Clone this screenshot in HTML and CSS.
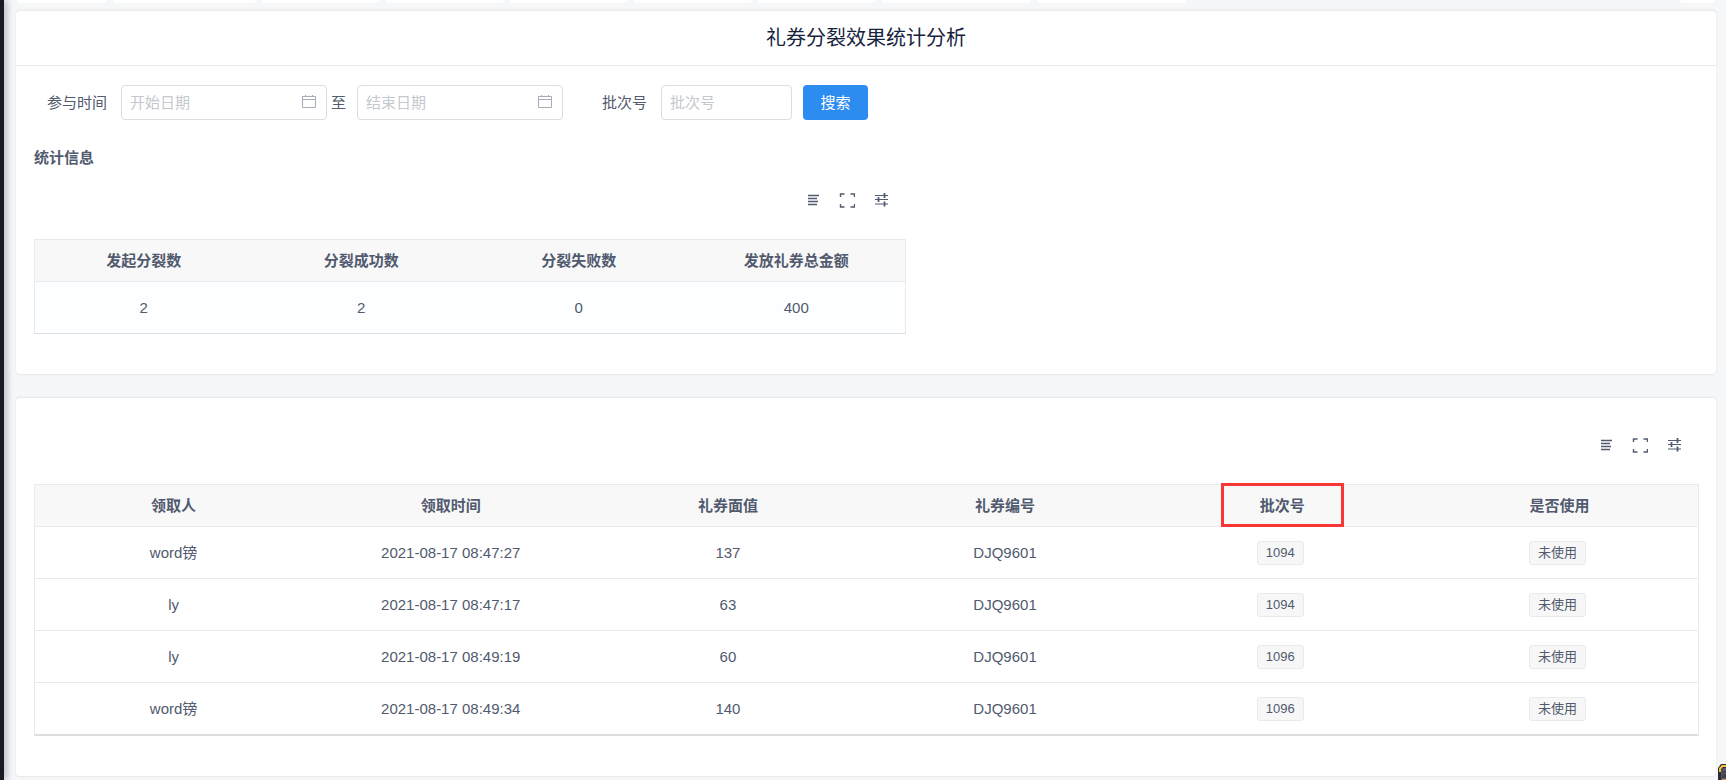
FILE: index.html
```html
<!DOCTYPE html>
<html lang="zh-CN">

<head>
  <meta charset="UTF-8">
  <meta name="viewport" content="width=device-width, initial-scale=1.0">
  <title>礼券分裂效果统计分析</title>
  <link rel="stylesheet" href="styles.css">
</head>

<body>
  <!-- Icons shared by both table toolbars -->
  <svg class="icon-defs" aria-hidden="true">
    <symbol id="icon-density" viewBox="0 0 16 16">
      <path d="M3 3.5h11M3 6.5h9M3 9.5h10M3 12.5h9" stroke="currentColor" stroke-width="1.7" />
    </symbol>
    <symbol id="icon-full" viewBox="0 0 16 16">
      <path d="M1.5 5V2h4M11.500 2h4V5M1.500 12v3h4M11.500 15h4V12" fill="none" stroke="currentColor" stroke-width="1.4" />
    </symbol>
    <symbol id="icon-columns" viewBox="0 0 16 16">
      <path d="M2 3.500h13M2 7.500h13M2 12h13" stroke="currentColor" stroke-width="1.2" />
      <path d="M11.500 1v5M5.500 5v5M11.500 9.500v5" stroke="currentColor" stroke-width="1.8" />
    </symbol>
  </svg>

  <aside class="sider"></aside>

  <main class="content">
    <!-- Page tabs, scrolled almost out of view -->
    <div class="tabs">
      <span class="tab tab-home"></span>
      <span class="tab tab-wide"></span>
      <span class="tab"></span>
      <span class="tab"></span>
      <span class="tab"></span>
      <span class="tab"></span>
      <span class="tab"></span>
      <span class="tab tab-wider"></span>
      <span class="tab tab-wider"></span>
      <span class="tab tab-more"></span>
    </div>

    <section class="card">
      <h1 class="card-title">礼券分裂效果统计分析</h1>

      <form class="search-form">
        <label for="start">参与时间</label>
        <div class="date-box">
          <input id="start" type="text" placeholder="开始日期">
          <svg class="date-icon" viewBox="0 0 16 16">
            <path d="M1.500 2.500h13v11h-13zM1.500 5.500h13M4.500 1v2M11.500 1v2" fill="none" stroke="currentColor" />
          </svg>
        </div>
        <label for="end" class="to">至</label>
        <div class="date-box">
          <input id="end" type="text" placeholder="结束日期">
          <svg class="date-icon" viewBox="0 0 16 16">
            <path d="M1.500 2.500h13v11h-13zM1.500 5.500h13M4.500 1v2M11.500 1v2" fill="none" stroke="currentColor" />
          </svg>
        </div>
        <label for="batch" class="batch-label">批次号</label>
        <input id="batch" class="batch-input" type="text" placeholder="批次号">
        <button type="button" class="search-btn">搜索</button>
      </form>

      <h2 class="sub-title">统计信息</h2>

      <div class="summary">
        <div class="toolbar">
          <button type="button" aria-label="密度"><svg><use href="#icon-density" /></svg></button>
          <button type="button" aria-label="全屏"><svg><use href="#icon-full" /></svg></button>
          <button type="button" aria-label="列设置"><svg><use href="#icon-columns" /></svg></button>
        </div>
        <table class="summary-table">
          <thead>
            <tr>
              <th>发起分裂数</th>
              <th>分裂成功数</th>
              <th>分裂失败数</th>
              <th>发放礼券总金额</th>
            </tr>
          </thead>
          <tbody>
            <tr>
              <td>2</td>
              <td>2</td>
              <td>0</td>
              <td>400</td>
            </tr>
          </tbody>
        </table>
      </div>
    </section>

    <section class="card card-list">
      <div class="toolbar">
        <button type="button" aria-label="密度"><svg><use href="#icon-density" /></svg></button>
        <button type="button" aria-label="全屏"><svg><use href="#icon-full" /></svg></button>
        <button type="button" aria-label="列设置"><svg><use href="#icon-columns" /></svg></button>
      </div>
      <table class="list-table">
        <thead>
          <tr>
            <th>领取人</th>
            <th>领取时间</th>
            <th>礼券面值</th>
            <th>礼券编号</th>
            <th class="marked">批次号</th>
            <th>是否使用</th>
          </tr>
        </thead>
        <tbody>
          <tr>
            <td>word镑</td>
            <td>2021-08-17 08:47:27</td>
            <td>137</td>
            <td>DJQ9601</td>
            <td><span class="tag">1094</span></td>
            <td><span class="tag">未使用</span></td>
          </tr>
          <tr>
            <td>ly</td>
            <td>2021-08-17 08:47:17</td>
            <td>63</td>
            <td>DJQ9601</td>
            <td><span class="tag">1094</span></td>
            <td><span class="tag">未使用</span></td>
          </tr>
          <tr>
            <td>ly</td>
            <td>2021-08-17 08:49:19</td>
            <td>60</td>
            <td>DJQ9601</td>
            <td><span class="tag">1096</span></td>
            <td><span class="tag">未使用</span></td>
          </tr>
          <tr>
            <td>word镑</td>
            <td>2021-08-17 08:49:34</td>
            <td>140</td>
            <td>DJQ9601</td>
            <td><span class="tag">1096</span></td>
            <td><span class="tag">未使用</span></td>
          </tr>
        </tbody>
      </table>
    </section>
  </main>

  <!-- Floating widget, mostly off the corner -->
  <svg class="widget" viewBox="0 0 8 16" aria-hidden="true">
    <path d="M0 16V4l3-4h5v16z" fill="#2a2b33" />
    <path d="M1 8V4l3-3h4v2H5L3 5v3z" fill="#f0c040" />
    <path d="M3 16V7l2-3h3v12z" fill="#555a6b" />
    <path d="M4 8h4M4 11h4M4 13h4" stroke="#2a2b33" />
    <path d="M4 15.500h4" stroke="#e8874a" />
  </svg>
</body>

</html>
```
FILE: styles.css
```css
* {
  box-sizing: border-box;
}

body {
  margin: 0;
  display: flex;
  height: 100vh;
  overflow: hidden;
  background-color: #f5f7f9;
  color: #515a6e;
  font-family: "Liberation Sans", "Noto Sans CJK SC", sans-serif;
  font-size: 15px;
  line-height: 24px;
}

.icon-defs {
  position: absolute;
  width: 0;
  height: 0;
}

.sider {
  flex: none;
  width: 4px;
  background-color: #191a23;
  box-shadow: 2px 0 7px rgba(0, 21, 41, 0.4);
}

.content {
  flex: 1;
  min-width: 0;
  padding: 0 10px 0 12px;
}

/* Tabs */
.tabs {
  display: flex;
  gap: 6px;
  height: 3px;
  padding: 0 1px;
  margin-bottom: 7px;
}

.tab {
  width: 118px;
  background-color: white;
  border-radius: 0 0 3px 3px;
}

.tab-home {
  width: 90px;
}

.tab-wide {
  width: 143px;
}

.tab-wider {
  width: 149px;
}

.tab-more {
  width: 35px;
  margin-left: auto;
}

/* Cards */
.card {
  background-color: white;
  border-radius: 4px;
  border-top: 1px solid #e8eaec;
  box-shadow: 0 1px 1px #e8eaec, 0 0 2px rgba(0, 0, 0, 0.1);
  padding-bottom: 40px;
  margin-bottom: 23px;
}

.card-title {
  margin: 0;
  padding: 11px 0;
  border-bottom: 1px solid #e8eaec;
  color: #17233d;
  font-size: 20px;
  line-height: 32px;
  font-weight: normal;
  text-align: center;
}

/* Search form */
.search-form {
  display: flex;
  align-items: center;
  padding: 19px 31px 0;
}

.search-form label {
  margin-right: 14px;
}

.search-form .to {
  margin: 0 11px 0 4px;
}

.search-form .batch-label {
  margin-left: 39px;
}

.search-form input {
  width: 100%;
  height: 35px;
  padding: 0 8px;
  border: 1px solid #dcdee2;
  border-radius: 4px;
  background-color: white;
  color: #515a6e;
  font-family: inherit;
  font-size: 15px;
}

.search-form input::placeholder {
  color: #c5c8ce;
}

.date-box {
  position: relative;
  width: 206px;
}

.date-icon {
  position: absolute;
  top: 9px;
  right: 10px;
  width: 16px;
  height: 16px;
  color: #a5abb8;
}

.search-form .batch-input {
  width: 131px;
}

.search-btn {
  width: 65px;
  height: 35px;
  margin-left: 11px;
  padding: 0 0 2px;
  border: none;
  border-radius: 4px;
  background-color: #2d8cf0;
  color: white;
  font-family: inherit;
  font-size: 15px;
  cursor: pointer;
}

.sub-title {
  margin: 26px 18px 0;
  font-size: 15px;
  line-height: 24px;
}

/* Tables */
.summary {
  width: 907px;
}

.toolbar {
  display: flex;
  justify-content: flex-end;
  gap: 18px;
  padding: 22px 34px 31px;
}

.toolbar button {
  width: 16px;
  height: 16px;
  padding: 0;
  border: none;
  background: none;
  color: #515a6e;
  cursor: pointer;
}

.toolbar svg {
  display: block;
  width: 16px;
  height: 16px;
}

table {
  table-layout: fixed;
  width: calc(100% - 35px);
  margin-left: 18px;
  border: 1px solid #e8eaec;
  border-bottom-color: #dcdee2;
  border-spacing: 0;
}

th,
td {
  padding: 0;
  text-align: center;
}

th {
  height: 42px;
  background-color: #f8f8f9;
  border-bottom: 1px solid #e8eaec;
}

td {
  height: 52px;
  border-bottom: 1px solid #e8eaec;
}

.summary-table td {
  height: 51px;
  background-color: #fcfeff;
  border-bottom: none;
}

.card-list {
  padding-top: 17px;
}

.list-table tr:last-child td {
  border-bottom-color: #dcdee2;
}

.marked {
  position: relative;
}

/* Red frame over the batch column heading */
.marked::after {
  content: "";
  box-sizing: border-box;
  position: absolute;
  top: -2px;
  bottom: -1px;
  left: 50%;
  width: 123px;
  margin-left: -61px;
  border: 3px solid #f93737;
}

.tag {
  display: inline-block;
  height: 24px;
  margin-right: 4px;
  padding: 0 8px;
  border: 1px solid #e8eaec;
  border-radius: 3px;
  background-color: #f7f7f7;
  font-size: 13px;
  line-height: 22px;
  vertical-align: middle;
}

.widget {
  position: fixed;
  right: 0;
  bottom: 0;
  width: 8px;
  height: 16px;
}
```
